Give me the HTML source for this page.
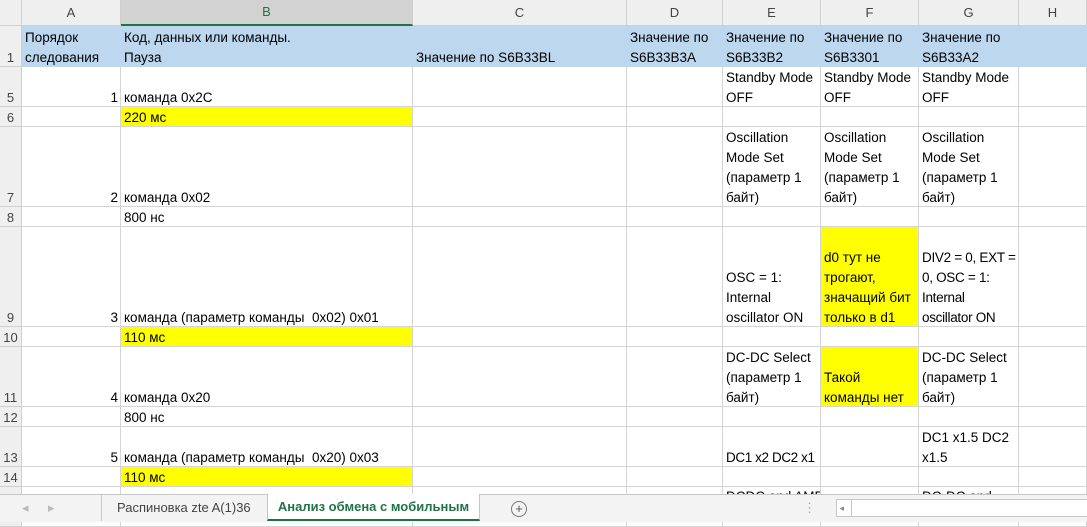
<!DOCTYPE html>
<html><head><meta charset="utf-8"><style>
body{margin:0;width:1087px;height:521px;overflow:hidden;background:#fff;font-family:"Liberation Sans",sans-serif;font-size:13.5px;color:#000;position:relative}
.c{position:absolute;box-sizing:border-box;border-right:1px solid #d4d4d4;border-bottom:1px solid #d4d4d4;display:flex;flex-direction:column;justify-content:flex-end;padding:0 2px 0 3px;line-height:20px;white-space:nowrap;overflow:hidden}
.c:not(.h)::after{content:"";height:0;margin-bottom:-2px;flex:none}
.h{background:#efefef;color:#444;justify-content:center;align-items:center;font-size:13px;border-color:#cfcfcf;padding:0}
.rh{background:#efefef;color:#444;align-items:center;font-size:13px;border-color:#cfcfcf;padding:0}
.sel{background:#d2d2d2;color:#217346;border-bottom:2px solid #217346}
.b{background:#bdd7ee;border-color:#bdd7ee}
.y{background:#ffff00}
.r{align-items:flex-end}
.tabs{position:absolute;left:0;top:494px;width:1087px;height:27px;background:#f3f3f3;border-top:1px solid #c6c6c6;color:#444}
.tab{position:absolute;top:0;height:25px;line-height:25px;font-size:13px}
</style></head><body>
<div class="c h" style="left:0;top:0;width:22px;height:26px"></div>
<div class="c h" style="left:22px;top:0;width:99px;height:26px">A</div>
<div class="c h sel" style="left:121px;top:0;width:292px;height:26px">B</div>
<div class="c h" style="left:413px;top:0;width:214px;height:26px">C</div>
<div class="c h" style="left:627px;top:0;width:96px;height:26px">D</div>
<div class="c h" style="left:723px;top:0;width:98px;height:26px">E</div>
<div class="c h" style="left:821px;top:0;width:98px;height:26px">F</div>
<div class="c h" style="left:919px;top:0;width:100px;height:26px">G</div>
<div class="c h" style="left:1019px;top:0;width:68px;height:26px">H</div>
<div class="c rh" style="left:0;top:26px;width:22px;height:41px">1</div>
<div class="c b" style="left:22px;top:26px;width:99px;height:41px"><span>Порядок</span><span>следования</span></div>
<div class="c b" style="left:121px;top:26px;width:292px;height:41px"><span>Код, данных или команды.</span><span>Пауза</span></div>
<div class="c b" style="left:413px;top:26px;width:214px;height:41px"><span>Значение по S6B33BL</span></div>
<div class="c b" style="left:627px;top:26px;width:96px;height:41px"><span>Значение по</span><span>S6B33B3A</span></div>
<div class="c b" style="left:723px;top:26px;width:98px;height:41px"><span>Значение по</span><span>S6B33B2</span></div>
<div class="c b" style="left:821px;top:26px;width:98px;height:41px"><span>Значение по</span><span>S6B3301</span></div>
<div class="c b" style="left:919px;top:26px;width:100px;height:41px"><span>Значение по</span><span>S6B33A2</span></div>
<div class="c b" style="left:1019px;top:26px;width:68px;height:41px"></div>
<div class="c rh" style="left:0;top:67px;width:22px;height:40px">5</div>
<div class="c r" style="left:22px;top:67px;width:99px;height:40px">1</div>
<div class="c" style="left:121px;top:67px;width:292px;height:40px">команда 0x2C</div>
<div class="c" style="left:413px;top:67px;width:214px;height:40px"></div>
<div class="c" style="left:627px;top:67px;width:96px;height:40px"></div>
<div class="c" style="left:723px;top:67px;width:98px;height:40px"><span>Standby Mode</span><span>OFF</span></div>
<div class="c" style="left:821px;top:67px;width:98px;height:40px"><span>Standby Mode</span><span>OFF</span></div>
<div class="c" style="left:919px;top:67px;width:100px;height:40px"><span>Standby Mode</span><span>OFF</span></div>
<div class="c" style="left:1019px;top:67px;width:68px;height:40px"></div>
<div class="c rh" style="left:0;top:107px;width:22px;height:20px">6</div>
<div class="c" style="left:22px;top:107px;width:99px;height:20px"></div>
<div class="c y" style="left:121px;top:107px;width:292px;height:20px">220 мс</div>
<div class="c" style="left:413px;top:107px;width:214px;height:20px"></div>
<div class="c" style="left:627px;top:107px;width:96px;height:20px"></div>
<div class="c" style="left:723px;top:107px;width:98px;height:20px"></div>
<div class="c" style="left:821px;top:107px;width:98px;height:20px"></div>
<div class="c" style="left:919px;top:107px;width:100px;height:20px"></div>
<div class="c" style="left:1019px;top:107px;width:68px;height:20px"></div>
<div class="c rh" style="left:0;top:127px;width:22px;height:80px">7</div>
<div class="c r" style="left:22px;top:127px;width:99px;height:80px">2</div>
<div class="c" style="left:121px;top:127px;width:292px;height:80px">команда 0x02</div>
<div class="c" style="left:413px;top:127px;width:214px;height:80px"></div>
<div class="c" style="left:627px;top:127px;width:96px;height:80px"></div>
<div class="c" style="left:723px;top:127px;width:98px;height:80px"><span>Oscillation</span><span>Mode Set</span><span>(параметр 1</span><span>байт)</span></div>
<div class="c" style="left:821px;top:127px;width:98px;height:80px"><span>Oscillation</span><span>Mode Set</span><span>(параметр 1</span><span>байт)</span></div>
<div class="c" style="left:919px;top:127px;width:100px;height:80px"><span>Oscillation</span><span>Mode Set</span><span>(параметр 1</span><span>байт)</span></div>
<div class="c" style="left:1019px;top:127px;width:68px;height:80px"></div>
<div class="c rh" style="left:0;top:207px;width:22px;height:20px">8</div>
<div class="c" style="left:22px;top:207px;width:99px;height:20px"></div>
<div class="c" style="left:121px;top:207px;width:292px;height:20px">800 нс</div>
<div class="c" style="left:413px;top:207px;width:214px;height:20px"></div>
<div class="c" style="left:627px;top:207px;width:96px;height:20px"></div>
<div class="c" style="left:723px;top:207px;width:98px;height:20px"></div>
<div class="c" style="left:821px;top:207px;width:98px;height:20px"></div>
<div class="c" style="left:919px;top:207px;width:100px;height:20px"></div>
<div class="c" style="left:1019px;top:207px;width:68px;height:20px"></div>
<div class="c rh" style="left:0;top:227px;width:22px;height:100px">9</div>
<div class="c r" style="left:22px;top:227px;width:99px;height:100px">3</div>
<div class="c" style="left:121px;top:227px;width:292px;height:100px">команда (параметр команды&nbsp; 0x02) 0x01</div>
<div class="c" style="left:413px;top:227px;width:214px;height:100px"></div>
<div class="c" style="left:627px;top:227px;width:96px;height:100px"></div>
<div class="c" style="left:723px;top:227px;width:98px;height:100px"><span>OSC = 1:</span><span>Internal</span><span>oscillator ON</span></div>
<div class="c y" style="left:821px;top:227px;width:98px;height:100px"><span>d0 тут не</span><span>трогают,</span><span>значащий бит</span><span>только в d1</span></div>
<div class="c" style="left:919px;top:227px;width:100px;height:100px;letter-spacing:-0.3px"><span>DIV2 = 0, EXT =</span><span>0, OSC = 1:</span><span>Internal</span><span>oscillator ON</span></div>
<div class="c" style="left:1019px;top:227px;width:68px;height:100px"></div>
<div class="c rh" style="left:0;top:327px;width:22px;height:20px">10</div>
<div class="c" style="left:22px;top:327px;width:99px;height:20px"></div>
<div class="c y" style="left:121px;top:327px;width:292px;height:20px">110 мс</div>
<div class="c" style="left:413px;top:327px;width:214px;height:20px"></div>
<div class="c" style="left:627px;top:327px;width:96px;height:20px"></div>
<div class="c" style="left:723px;top:327px;width:98px;height:20px"></div>
<div class="c" style="left:821px;top:327px;width:98px;height:20px"></div>
<div class="c" style="left:919px;top:327px;width:100px;height:20px"></div>
<div class="c" style="left:1019px;top:327px;width:68px;height:20px"></div>
<div class="c rh" style="left:0;top:347px;width:22px;height:60px">11</div>
<div class="c r" style="left:22px;top:347px;width:99px;height:60px">4</div>
<div class="c" style="left:121px;top:347px;width:292px;height:60px">команда 0x20</div>
<div class="c" style="left:413px;top:347px;width:214px;height:60px"></div>
<div class="c" style="left:627px;top:347px;width:96px;height:60px"></div>
<div class="c" style="left:723px;top:347px;width:98px;height:60px"><span>DC-DC Select</span><span>(параметр 1</span><span>байт)</span></div>
<div class="c y" style="left:821px;top:347px;width:98px;height:60px"><span>Такой</span><span>команды нет</span></div>
<div class="c" style="left:919px;top:347px;width:100px;height:60px"><span>DC-DC Select</span><span>(параметр 1</span><span>байт)</span></div>
<div class="c" style="left:1019px;top:347px;width:68px;height:60px"></div>
<div class="c rh" style="left:0;top:407px;width:22px;height:20px">12</div>
<div class="c" style="left:22px;top:407px;width:99px;height:20px"></div>
<div class="c" style="left:121px;top:407px;width:292px;height:20px">800 нс</div>
<div class="c" style="left:413px;top:407px;width:214px;height:20px"></div>
<div class="c" style="left:627px;top:407px;width:96px;height:20px"></div>
<div class="c" style="left:723px;top:407px;width:98px;height:20px"></div>
<div class="c" style="left:821px;top:407px;width:98px;height:20px"></div>
<div class="c" style="left:919px;top:407px;width:100px;height:20px"></div>
<div class="c" style="left:1019px;top:407px;width:68px;height:20px"></div>
<div class="c rh" style="left:0;top:427px;width:22px;height:40px">13</div>
<div class="c r" style="left:22px;top:427px;width:99px;height:40px">5</div>
<div class="c" style="left:121px;top:427px;width:292px;height:40px">команда (параметр команды&nbsp; 0x20) 0x03</div>
<div class="c" style="left:413px;top:427px;width:214px;height:40px"></div>
<div class="c" style="left:627px;top:427px;width:96px;height:40px"></div>
<div class="c" style="left:723px;top:427px;width:98px;height:40px;letter-spacing:-0.4px">DC1 x2 DC2 x1</div>
<div class="c" style="left:821px;top:427px;width:98px;height:40px"></div>
<div class="c" style="left:919px;top:427px;width:100px;height:40px"><span>DC1 x1.5 DC2</span><span>x1.5</span></div>
<div class="c" style="left:1019px;top:427px;width:68px;height:40px"></div>
<div class="c rh" style="left:0;top:467px;width:22px;height:20px">14</div>
<div class="c" style="left:22px;top:467px;width:99px;height:20px"></div>
<div class="c y" style="left:121px;top:467px;width:292px;height:20px">110 мс</div>
<div class="c" style="left:413px;top:467px;width:214px;height:20px"></div>
<div class="c" style="left:627px;top:467px;width:96px;height:20px"></div>
<div class="c" style="left:723px;top:467px;width:98px;height:20px"></div>
<div class="c" style="left:821px;top:467px;width:98px;height:20px"></div>
<div class="c" style="left:919px;top:467px;width:100px;height:20px"></div>
<div class="c" style="left:1019px;top:467px;width:68px;height:20px"></div>
<div class="c rh" style="left:0;top:487px;width:22px;height:40px"></div>
<div class="c" style="left:22px;top:487px;width:99px;height:40px"></div>
<div class="c" style="left:121px;top:487px;width:292px;height:40px"></div>
<div class="c" style="left:413px;top:487px;width:214px;height:40px"></div>
<div class="c" style="left:627px;top:487px;width:96px;height:40px"></div>
<div class="c" style="left:723px;top:487px;width:98px;height:40px;justify-content:flex-start">DCDC and AMP</div>
<div class="c" style="left:821px;top:487px;width:98px;height:40px"></div>
<div class="c" style="left:919px;top:487px;width:100px;height:40px;justify-content:flex-start">DC-DC and</div>
<div class="c" style="left:1019px;top:487px;width:68px;height:40px"></div>
<div class="tabs">
<div class="tab" style="left:22px;color:#bbb">◂</div><div class="tab" style="left:48px;color:#bbb">▸</div>
<div class="tab" style="left:101px;height:26px;border-left:1px solid #c6c6c6"></div>
<div class="tab" style="left:117px">Распиновка zte A(1)36</div>
<div class="tab" style="left:267px;width:211px;background:#fff;border-left:1px solid #c6c6c6;border-right:1px solid #c6c6c6;border-bottom:2px solid #217346;color:#217346;font-weight:bold;text-align:center;top:-1px">Анализ обмена с мобильным</div>
<div class="tab" style="left:511px;top:6px;width:14px;height:14px;border:1px solid #777;border-radius:50%;line-height:14px;text-align:center;color:#555;font-size:13px">+</div>
<div class="tab" style="left:803px;color:#aaa">⋮</div>
<div class="tab" style="left:836px;top:4px;width:251px;height:16px;border:1px solid #c6c6c6;background:#fff;line-height:16px;font-size:9px;color:#888">&nbsp;◂</div>
<div class="tab" style="left:851px;top:4px;width:1px;height:18px;background:#c6c6c6"></div>
</div>
</body></html>
